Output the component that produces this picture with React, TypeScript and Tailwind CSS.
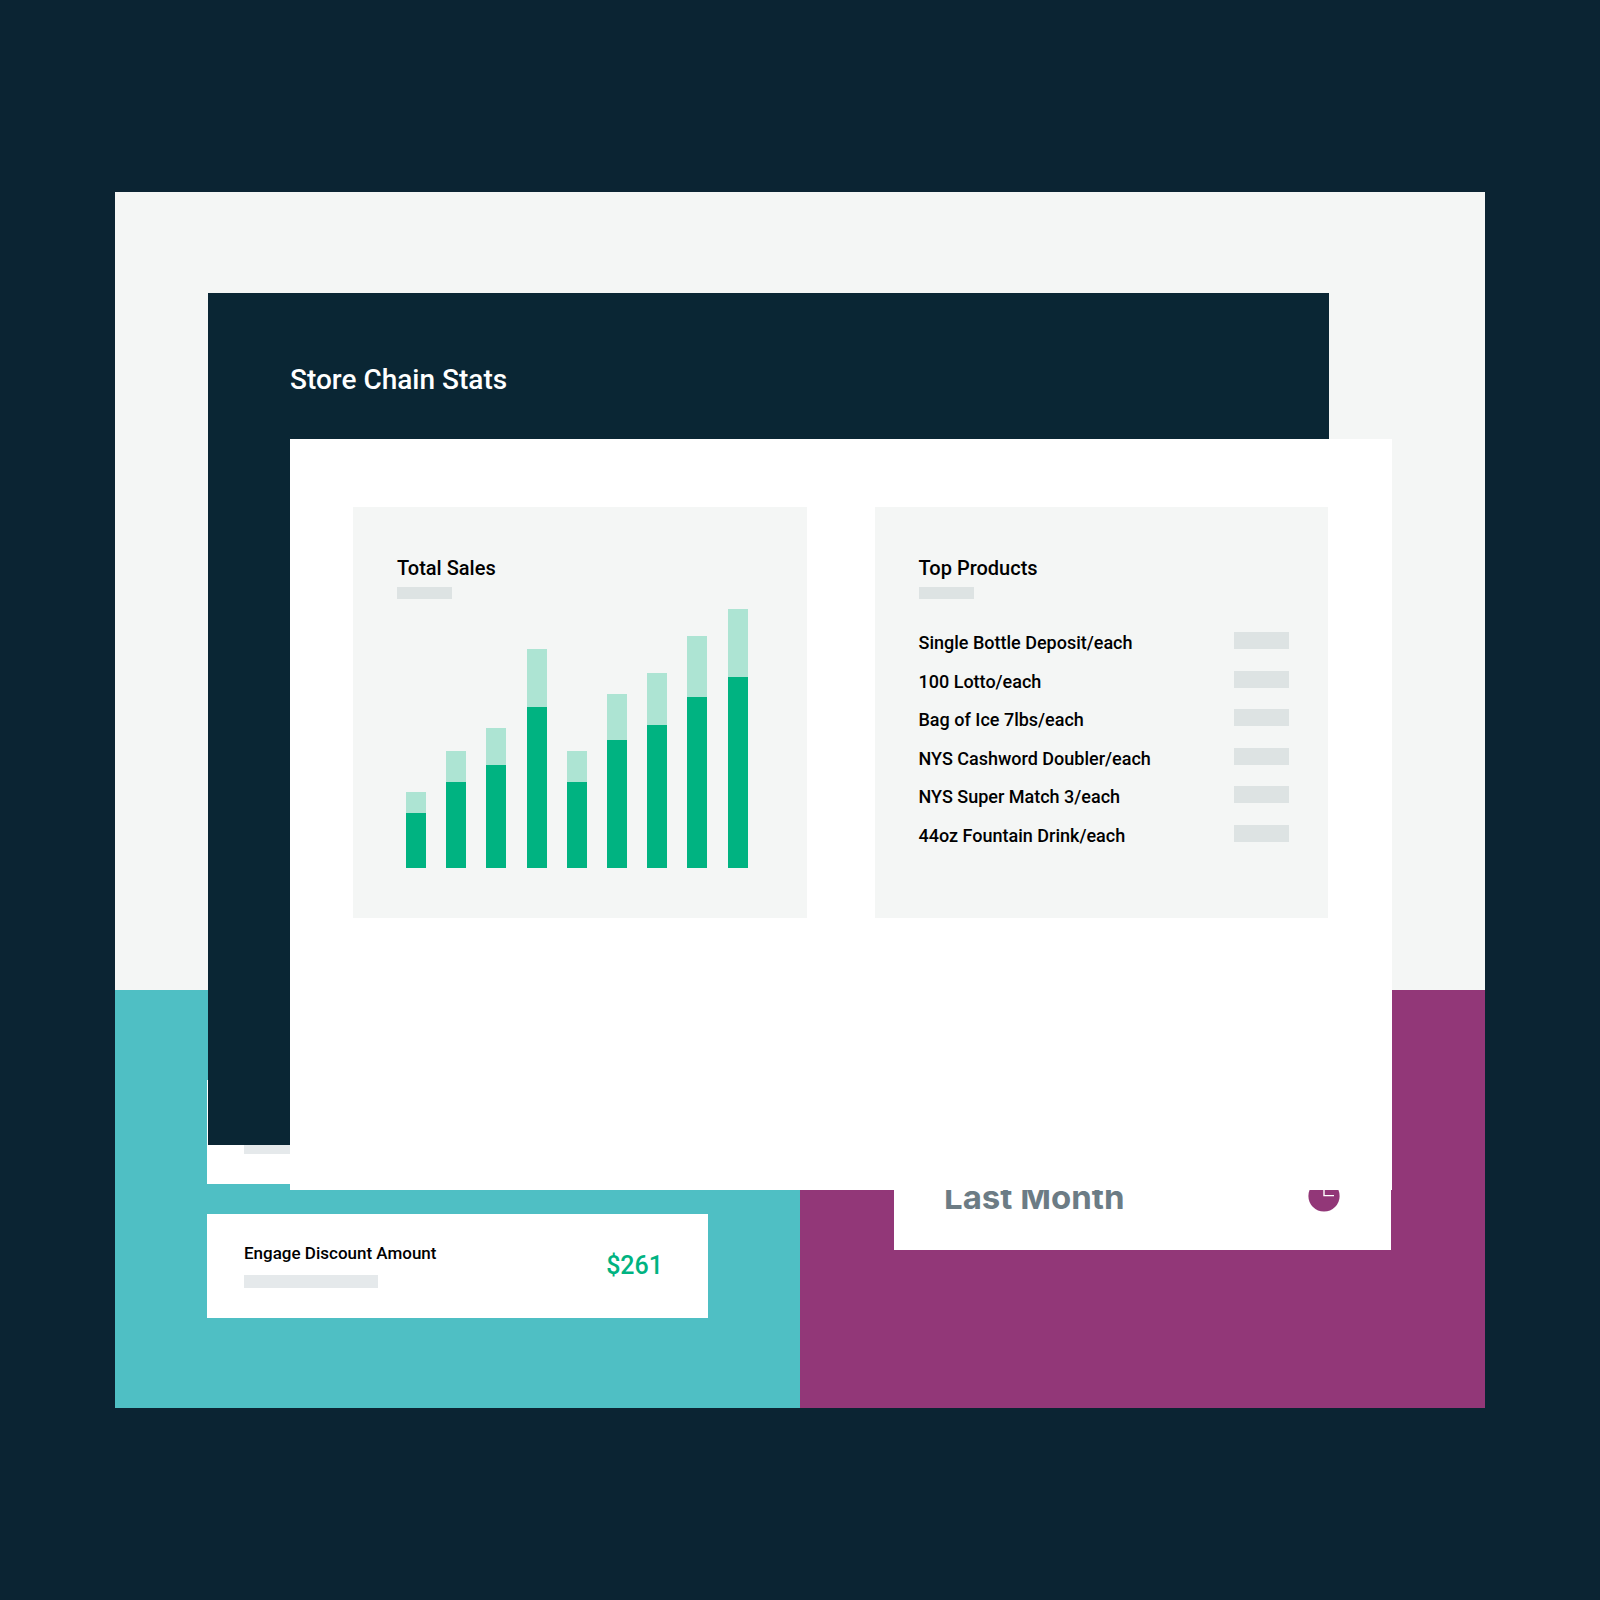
import type { ReactNode } from "react";

const SALES = [
  { total: 76, base: 55 },
  { total: 117, base: 86 },
  { total: 140, base: 103 },
  { total: 219, base: 161 },
  { total: 117, base: 86 },
  { total: 174, base: 128 },
  { total: 195, base: 143 },
  { total: 232, base: 171 },
  { total: 259, base: 191 },
];

const PRODUCTS = [
  "Single Bottle Deposit/each",
  "100 Lotto/each",
  "Bag of Ice 7lbs/each",
  "NYS Cashword Doubler/each",
  "NYS Super Match 3/each",
  "44oz Fountain Drink/each",
];

function SalesChart() {
  return (
    <div
      role="img"
      aria-label="Total sales"
      className="mt-[9px] mr-[15px] ml-[9px] flex h-[260px] items-end justify-between"
    >
      {SALES.map((bar, i) => (
        <div
          key={i}
          className="flex w-5 flex-col justify-end bg-[#ade4d3]"
          style={{ height: bar.total }}
        >
          <div className="bg-[#00b381]" style={{ height: bar.base }} />
        </div>
      ))}
    </div>
  );
}

function Panel({ title, children }: { title: string; children: ReactNode }) {
  return (
    <section className="bg-[#f4f6f5] px-11 pt-[45px] pb-[50px] text-black">
      <h2 className="text-[20px] leading-8 font-medium whitespace-nowrap">{title}</h2>
      <div className="mt-[3px] h-3 w-[55px] bg-[#dde3e3]" />
      {children}
    </section>
  );
}

function StatsWindow() {
  return (
    <main className="relative z-10 col-start-1 row-start-1 mt-[101px] mr-[156px] ml-[93px] self-start bg-[#0a2634]">
      <h1 className="flex h-[146px] items-center pt-7 pl-[82px] text-[28px] leading-9 font-medium text-white">
        Store Chain Stats
      </h1>
      <div className="-mr-[63px] -mb-[45px] ml-[82px] grid min-h-[751px] grid-cols-2 items-start gap-[68px] bg-white pt-[68px] pr-16 pl-[63px]">
        <Panel title="Total Sales">
          <SalesChart />
        </Panel>
        <Panel title="Top Products">
          <ul className="-mr-[5px] mt-[33px] mb-[21px] flex h-[215px] flex-col justify-between">
            {PRODUCTS.map((name) => (
              <li key={name} className="flex items-start justify-between text-[18px] leading-[22px] font-medium">
                <span className="whitespace-nowrap">{name}</span>
                <span className="h-[17px] w-[55px] bg-[#dde3e3]" />
              </li>
            ))}
          </ul>
        </Panel>
      </div>
    </main>
  );
}

function AmountCard({ label, amount }: { label?: string; amount?: string }) {
  return (
    <article className="flex h-[104px] items-center justify-between bg-white pr-[45px] pl-[37px]">
      <div className="w-[134px]">
        <p className="h-6 text-[17px] leading-6 font-medium whitespace-nowrap text-black">{label}</p>
        <div className="mt-[10px] mb-[3px] h-[13px] bg-[#e5e9eb]" />
      </div>
      <p className="text-[25px] leading-8 font-medium text-[#00b381]">{amount}</p>
    </article>
  );
}

function ClockIcon() {
  return (
    <svg viewBox="0 0 32 32" className="size-8" aria-hidden="true">
      <circle cx="16" cy="15" r="15.6" fill="#923778" />
      <path d="M16 4v10.6h10" fill="none" stroke="#fff" strokeWidth="1.4" />
    </svg>
  );
}

export default function App() {
  return (
    <div className="min-h-screen bg-[#0b2433] px-[115px] py-48 font-['Roboto',sans-serif]">
      <div className="grid bg-[#f4f6f5]">
        <StatsWindow />
        <div className="col-start-1 row-start-1 grid grid-cols-2 pt-[798px]">
          <div className="grid content-start gap-[30px] bg-[#4fbfc4] px-[92px] py-[90px]">
            <AmountCard />
            <AmountCard label="Engage Discount Amount" amount="$261" />
          </div>
          <div className="bg-[#923778] px-[94px] pt-[150px]">
            <article className="flex h-[110px] items-center justify-between bg-white pt-[3px] pr-[51px] pl-[50px]">
              <h2 className="font-['Inter',sans-serif] text-[33px] leading-10 font-bold whitespace-nowrap text-[#6c7c85]">
                Last Month
              </h2>
              <ClockIcon />
            </article>
          </div>
        </div>
      </div>
    </div>
  );
}
